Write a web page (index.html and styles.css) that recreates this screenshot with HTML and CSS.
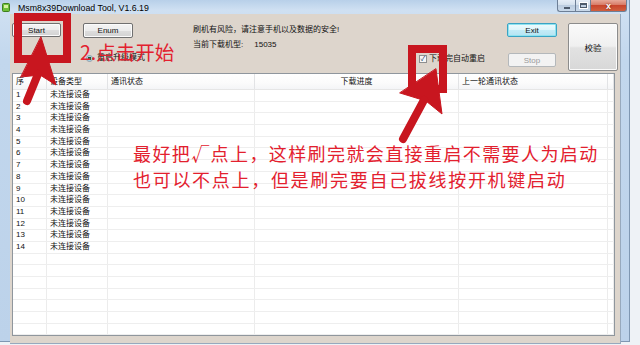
FILE: index.html
```html
<!DOCTYPE html>
<html lang="zh-CN">
<head>
    <meta charset="UTF-8">
    <title>Msm8x39Download Tool, V1.6.19</title>
    <link rel="stylesheet" href="styles.css">
</head>
<body>
    <div class="window">
        <div class="titlebar">
            <svg class="app-icon" width="8" height="9" viewBox="0 0 8 9">
                <rect x="0.5" y="0.5" width="7" height="8" rx="1" fill="#6fbf3a" stroke="#3f7f1f"/>
                <rect x="2" y="2" width="4" height="3" fill="#d8f0a0"/>
            </svg>
            <span class="title">Msm8x39Download Tool, V1.6.19</span>
            <div class="caption">
                <span class="cap cap-min"><i></i></span>
                <span class="cap cap-max"><i></i></span>
                <span class="cap cap-close">x</span>
            </div>
        </div>
        <div class="client">
            <div class="panel">
                <div class="col col-start">
                    <button class="btn btn-start">Start</button>
                </div>
                <div class="col col-enum">
                    <button class="btn btn-enum">Enum</button>
                    <label class="radio"><span class="radio-dot"></span>重启升级模式</label>
                </div>
                <div class="col col-info">
                    <div class="info-line">刷机有风险，请注意手机以及数据的安全!</div>
                    <div class="info-line">当前下载机型:<span class="model">15035</span></div>
                    <label class="check"><span class="check-box">✓</span>下载完自动重启</label>
                </div>
                <div class="col col-exit">
                    <button class="btn btn-exit">Exit</button>
                    <button class="btn btn-stop" disabled>Stop</button>
                </div>
                <div class="col col-verify">
                    <button class="btn btn-verify">校验</button>
                </div>
            </div>
            <div class="list">
                <div class="row head">
                    <span>序</span><span>设备类型</span><span>通讯状态</span><span class="center">下载进度</span><span>上一轮通讯状态</span><span></span>
                </div>
                <div class="row"><span>1</span><span>未连接设备</span><span></span><span></span><span></span><span></span></div>
                <div class="row"><span>2</span><span>未连接设备</span><span></span><span></span><span></span><span></span></div>
                <div class="row"><span>3</span><span>未连接设备</span><span></span><span></span><span></span><span></span></div>
                <div class="row"><span>4</span><span>未连接设备</span><span></span><span></span><span></span><span></span></div>
                <div class="row"><span>5</span><span>未连接设备</span><span></span><span></span><span></span><span></span></div>
                <div class="row"><span>6</span><span>未连接设备</span><span></span><span></span><span></span><span></span></div>
                <div class="row"><span>7</span><span>未连接设备</span><span></span><span></span><span></span><span></span></div>
                <div class="row"><span>8</span><span>未连接设备</span><span></span><span></span><span></span><span></span></div>
                <div class="row"><span>9</span><span>未连接设备</span><span></span><span></span><span></span><span></span></div>
                <div class="row"><span>10</span><span>未连接设备</span><span></span><span></span><span></span><span></span></div>
                <div class="row"><span>11</span><span>未连接设备</span><span></span><span></span><span></span><span></span></div>
                <div class="row"><span>12</span><span>未连接设备</span><span></span><span></span><span></span><span></span></div>
                <div class="row"><span>13</span><span>未连接设备</span><span></span><span></span><span></span><span></span></div>
                <div class="row"><span>14</span><span>未连接设备</span><span></span><span></span><span></span><span></span></div>
                <div class="row"><span></span><span></span><span></span><span></span><span></span><span></span></div>
                <div class="row"><span></span><span></span><span></span><span></span><span></span><span></span></div>
                <div class="row"><span></span><span></span><span></span><span></span><span></span><span></span></div>
                <div class="row"><span></span><span></span><span></span><span></span><span></span><span></span></div>
                <div class="row"><span></span><span></span><span></span><span></span><span></span><span></span></div>
                <div class="row"><span></span><span></span><span></span><span></span><span></span><span></span></div>
                <div class="row"><span></span><span></span><span></span><span></span><span></span><span></span></div>
            </div>
        </div>
    </div>

    <!-- red annotations drawn over the screenshot -->
    <svg class="marks" width="640" height="345" viewBox="0 0 640 345">
        <g fill="none" stroke="#c8161f" stroke-width="8">
            <rect x="18" y="17" width="49" height="42"/>
            <rect x="412" y="49" width="31" height="40"/>
        </g>
        <g fill="#c8161f" stroke="#c8161f" stroke-linecap="round" stroke-linejoin="round">
            <polygon points="41,37 56,85 40,75 21,77" stroke-width="1"/>
            <line x1="38" y1="74" x2="27" y2="101" stroke-width="8"/>
            <polygon points="436,69 442,114 426,101 400,93" stroke-width="1"/>
            <line x1="424" y1="100" x2="403" y2="139" stroke-width="8"/>
        </g>
    </svg>
    <div class="note note-start">2.点击开始</div>
    <div class="note note-tip">
        <div class="tip-line tip-first">最好把√点上，这样刷完就会直接重启不需要人为启动</div>
        <div class="tip-line">也可以不点上，但是刷完要自己拔线按开机键启动</div>
    </div>
</body>
</html>
```

FILE: styles.css
```css
* { box-sizing: border-box; margin: 0; padding: 0; }
body {
    width: 640px;
    height: 345px;
    overflow: hidden;
    position: relative;
    background: #eef2f6;
    font-family: "Liberation Sans", "Noto Sans CJK SC", sans-serif;
    font-size: 8px;
    color: #111;
}
.window {
    width: 630px;
    height: 342px;
    display: flex;
    flex-direction: column;
    background: linear-gradient(180deg, #b8d0e9 0%, #cfe0f2 10px, #c2d7ed 60px, #bcd2ea 100%);
    border-right: 1px solid #7f97b2;
    border-bottom: 1px solid #7f97b2;
}
.titlebar {
    height: 18px;
    display: flex;
    align-items: flex-start;
}
.app-icon {
    margin: 3px 0 0 2px;
}
.title {
    margin: 3px 0 0 8px;
    font-size: 8.8px;
    line-height: 11px;
    color: #000;
}
.caption {
    margin-left: auto;
    margin-right: 2px;
    display: flex;
    height: 12px;
}
.cap {
    height: 12px;
    border: 1px solid #6d7f96;
    border-top: none;
    background: linear-gradient(180deg, #e6eef7 0%, #d2dfec 50%, #bccde0 50%, #c9d9ea 100%);
    display: flex;
    align-items: center;
    justify-content: center;
}
.cap-min { width: 18px; border-radius: 0 0 0 3px; border-right: none; }
.cap-min i { width: 6px; height: 2px; margin-top: 4px; background: #fff; border: 1px solid #4d5b6c; }
.cap-max { width: 15px; border-right: none; }
.cap-max i { width: 7px; height: 5px; border: 1px solid #4d5b6c; border-top-width: 2px; box-shadow: 0 0 0 1px #fff; }
.cap-close {
    width: 37px;
    border-radius: 0 0 3px 0;
    background: linear-gradient(180deg, #e7a99a 0%, #d77a66 45%, #c8452c 50%, #d0603f 100%);
    color: #fff;
    font-weight: bold;
    font-size: 9px;
    line-height: 10px;
    text-shadow: 0 0 2px #6a1a0a;
}
.client {
    flex: 1;
    margin: 0 8px 5px 10px;
    background: #ddd5cc;
    border: 1px solid #97a9bd;
    border-width: 0 1px 1px 0;
    display: flex;
    flex-direction: column;
}
.panel {
    height: 59px;
    display: flex;
    padding: 9px 0 0 2px;
}
.col {
    display: flex;
    flex-direction: column;
    align-items: flex-start;
}
.col-start { width: 49px; }
.col-enum { width: 70px; margin-left: 22px; }
.col-info { width: 314px; margin-left: 40px; }
.col-exit { width: 50px; }
.col-verify { width: 50px; margin-left: 11px; }
.btn {
    font-family: "Liberation Sans", "Noto Sans CJK SC", sans-serif;
    font-size: 8px;
    color: #111;
    border: 1px solid #707070;
    border-radius: 2px;
    background: linear-gradient(180deg, #f4f4f4 0%, #ececec 50%, #dedede 50%, #d2d2d2 100%);
    box-shadow: inset 0 0 0 1px #fbfbfb;
}
.btn-start { width: 49px; height: 14px; }
.btn-enum { width: 50px; height: 15px; }
.btn-exit {
    width: 50px;
    height: 14px;
    border-color: #3aa3c4;
    background: linear-gradient(180deg, #eefbfd 0%, #dcf5fb 50%, #c4ecf7 50%, #b5e4f3 100%);
    box-shadow: inset 0 0 0 1px #8fe3f0;
}
.btn-stop {
    width: 48px;
    height: 14px;
    margin: 16px 0 0 1px;
    color: #9a9a9a;
    border-color: #b4b8bb;
    background: #f3f3f3;
    box-shadow: none;
}
.btn-verify {
    width: 50px;
    height: 48px;
    font-size: 8.5px;
    border-color: #8c8c8c;
    background: linear-gradient(180deg, #fafafa 0%, #f0f0f0 48%, #e2e2e2 52%, #d8d8d8 100%);
}
.radio {
    display: flex;
    align-items: center;
    margin: 16px 0 0 3px;
    height: 8px;
    line-height: 8px;
}
.radio-dot {
    width: 7px;
    height: 7px;
    margin-right: 4px;
    border-radius: 50%;
    border: 1px solid #8a9bab;
    background: radial-gradient(circle, #1d5d3f 0 1.6px, #9fd7e8 2px, #f4f8fb 3px);
}
.info-line {
    line-height: 12px;
    margin-top: 1px;
}
.info-line + .info-line { margin-top: 3px; }
.model { margin-left: 11px; }
.check {
    display: flex;
    align-items: center;
    height: 8px;
    line-height: 8px;
    margin: 4px 0 0 226px;
}
.check-box {
    width: 8px;
    height: 8px;
    margin-right: 2px;
    border: 1px solid #8e8f8f;
    background: #f7f7f7;
    color: #1e3d6e;
    font-size: 7px;
    line-height: 6px;
    text-align: center;
}
.list {
    flex: 1;
    margin: 0 5px 7px 2px;
    background: #fff;
    border: 1px solid #8f969d;
    overflow: hidden;
}
.row {
    display: grid;
    grid-template-columns: 34px 61px 147px 204px 149px 1fr;
    height: 11.7px;
    line-height: 10.7px;
    border-bottom: 1px solid #eeeeee;
}
.row span {
    padding-left: 3px;
    border-right: 1px solid #ececec;
    white-space: nowrap;
}
.row.head {
    height: 16px;
    line-height: 15px;
    border-bottom: 1px solid #e6e6e6;
    background: linear-gradient(180deg, #ffffff 0%, #fbfbfb 60%, #f4f5f7 100%);
}
.row.head span { border-right-color: #e2e3e5; }
.row.head .center { text-align: center; padding-left: 0; }
.marks {
    position: absolute;
    left: 0;
    top: 0;
    pointer-events: none;
}
.note {
    position: absolute;
    font-family: "Noto Sans CJK SC", sans-serif;
    color: #e3202e;
    white-space: nowrap;
}
.note-start {
    left: 80px;
    top: 41px;
    font-size: 19.5px;
    line-height: 22px;
}
.note-tip {
    left: 133px;
    top: 140px;
    font-size: 18px;
    line-height: 26px;
    letter-spacing: 1.7px;
}
.tip-first { letter-spacing: 1.4px; }
```
